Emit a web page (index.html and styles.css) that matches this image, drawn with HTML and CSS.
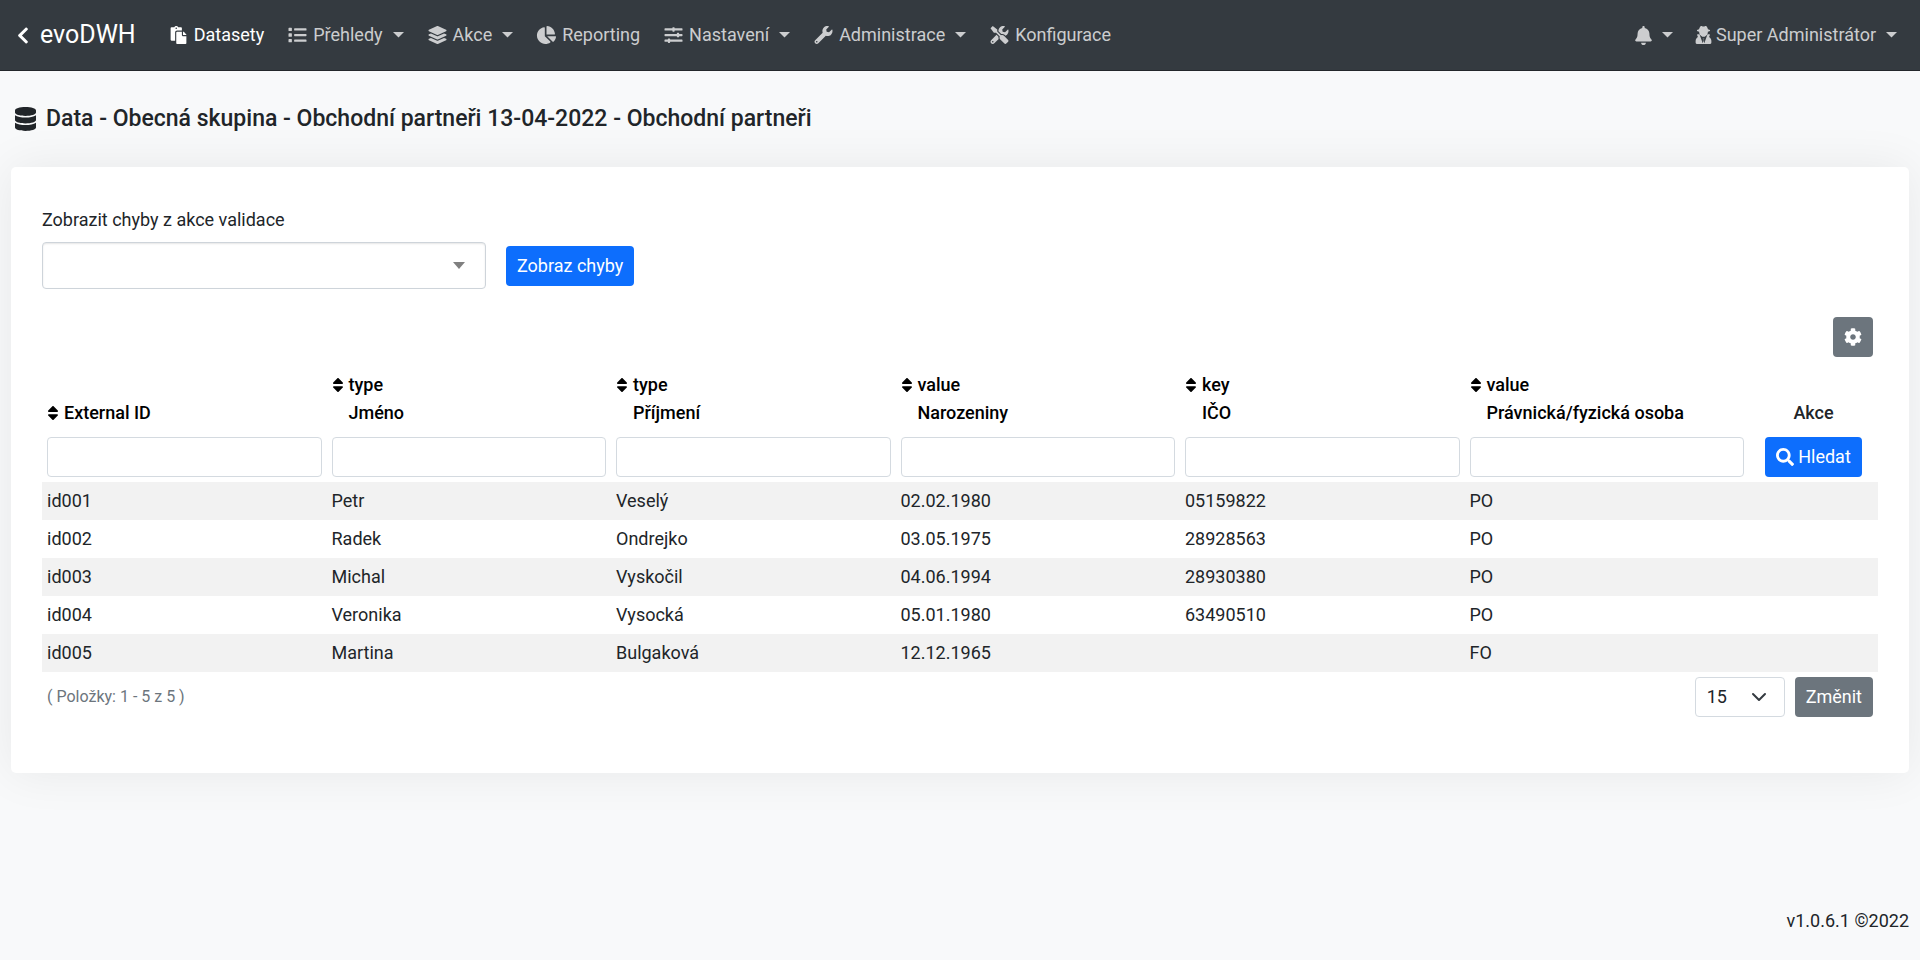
FILE: index.html
```html
<!DOCTYPE html>
<html lang="cs">
  <head>
    <meta charset="utf-8" />
    <meta name="viewport" content="width=device-width, initial-scale=1" />
    <title>evoDWH</title>
    <link rel="stylesheet" href="styles.css">
  </head>
  <body>
    <svg class="sprite" aria-hidden="true">
      <symbol id="chevron-left" viewBox="0 0 320 512"><path d="M34.52 239.03L228.87 44.69c9.37-9.37 24.57-9.37 33.94 0l22.67 22.67c9.36 9.36 9.37 24.52.04 33.9L131.49 256l154.02 154.75c9.34 9.38 9.32 24.54-.04 33.9l-22.67 22.67c-9.37 9.37-24.57 9.37-33.94 0L34.52 272.97c-9.37-9.37-9.37-24.57 0-33.94z"/></symbol>
      <symbol id="database" viewBox="0 0 448 512"><path d="M448 73.143v45.714C448 159.143 347.667 192 224 192S0 159.143 0 118.857V73.143C0 32.857 100.333 0 224 0s224 32.857 224 73.143zM448 176v102.857C448 319.143 347.667 352 224 352S0 319.143 0 278.857V176c48.125 33.143 136.208 48.572 224 48.572S399.874 209.143 448 176zm0 160v102.857C448 479.143 347.667 512 224 512S0 479.143 0 438.857V336c48.125 33.143 136.208 48.572 224 48.572S399.874 369.143 448 336z"/></symbol>
      <symbol id="paste" viewBox="0 0 448 512"><path d="M128 184c0-30.879 25.122-56 56-56h136V56c0-13.255-10.745-24-24-24h-80.61C204.306 12.89 183.637 0 160 0s-44.306 12.89-55.39 32H24C10.745 32 0 42.745 0 56v336c0 13.255 10.745 24 24 24h104V184zm32-144c13.255 0 24 10.745 24 24s-10.745 24-24 24-24-10.745-24-24 10.745-24 24-24zm184 248h104v200c0 13.255-10.745 24-24 24H184c-13.255 0-24-10.745-24-24V184c0-13.255 10.745-24 24-24h136v104c0 13.2 10.8 24 24 24zm104-38.059V256h-96v-96h6.059a24 24 0 0 1 16.97 7.029l65.941 65.941a24.002 24.002 0 0 1 7.03 16.971z"/></symbol>
      <symbol id="list" viewBox="0 0 512 512"><path d="M80 368H16a16 16 0 0 0-16 16v64a16 16 0 0 0 16 16h64a16 16 0 0 0 16-16v-64a16 16 0 0 0-16-16zm0-320H16A16 16 0 0 0 0 64v64a16 16 0 0 0 16 16h64a16 16 0 0 0 16-16V64a16 16 0 0 0-16-16zm0 160H16a16 16 0 0 0-16 16v64a16 16 0 0 0 16 16h64a16 16 0 0 0 16-16v-64a16 16 0 0 0-16-16zm416 176H176a16 16 0 0 0-16 16v32a16 16 0 0 0 16 16h320a16 16 0 0 0 16-16v-32a16 16 0 0 0-16-16zm0-320H176a16 16 0 0 0-16 16v32a16 16 0 0 0 16 16h320a16 16 0 0 0 16-16V80a16 16 0 0 0-16-16zm0 160H176a16 16 0 0 0-16 16v32a16 16 0 0 0 16 16h320a16 16 0 0 0 16-16v-32a16 16 0 0 0-16-16z"/></symbol>
      <symbol id="layers" viewBox="0 0 512 512"><path d="M12.41 148.02l232.94 105.67c6.8 3.09 14.49 3.09 21.29 0l232.94-105.67c16.55-7.51 16.55-32.52 0-40.03L266.65 2.31a25.607 25.607 0 0 0-21.29 0L12.41 107.98c-16.55 7.51-16.55 32.53 0 40.04zm487.18 88.28l-58.09-26.33-161.64 73.27c-7.56 3.43-15.59 5.17-23.86 5.17s-16.29-1.74-23.86-5.17L70.51 209.97l-58.1 26.33c-16.55 7.5-16.55 32.5 0 40l232.94 105.59c6.8 3.08 14.49 3.08 21.29 0L499.59 276.3c16.55-7.5 16.55-32.5 0-40zm0 127.8l-57.87-26.23-161.86 73.37c-7.56 3.43-15.59 5.17-23.86 5.17s-16.29-1.74-23.86-5.17L70.29 337.87 12.41 364.1c-16.55 7.5-16.55 32.5 0 40l232.94 105.59c6.8 3.08 14.49 3.08 21.29 0L499.59 404.1c16.55-7.5 16.55-32.5 0-40z"/></symbol>
      <symbol id="pie" viewBox="0 0 544 512"><path d="M527.79 288H290.5l158.03 158.03c6.04 6.04 15.98 6.53 22.19.68 38.7-36.46 65.32-85.61 73.13-140.86 1.34-9.46-6.51-17.85-16.06-17.85zm-15.83-64.8C503.72 103.74 408.26 8.28 288.8.04 279.68-.59 272 7.1 272 16.24V240h223.77c9.14 0 16.82-7.68 16.19-16.8zM224 288V50.71c0-9.55-8.39-17.4-17.84-16.06C86.99 51.49-4.1 155.6.14 280.37 4.5 408.51 114.83 513.59 243.03 511.98c50.4-.63 96.97-16.87 135.26-44.03 7.9-5.6 8.42-17.23 1.57-24.08L224 288z"/></symbol>
      <symbol id="sliders" viewBox="0 0 512 512"><path d="M496 384H160v-16c0-8.8-7.2-16-16-16h-32c-8.8 0-16 7.2-16 16v16H16c-8.8 0-16 7.2-16 16v32c0 8.8 7.2 16 16 16h80v16c0 8.8 7.2 16 16 16h32c8.8 0 16-7.2 16-16v-16h336c8.8 0 16-7.2 16-16v-32c0-8.8-7.2-16-16-16zm0-160h-80v-16c0-8.8-7.2-16-16-16h-32c-8.8 0-16 7.2-16 16v16H16c-8.8 0-16 7.2-16 16v32c0 8.8 7.2 16 16 16h336v16c0 8.8 7.2 16 16 16h32c8.8 0 16-7.2 16-16v-16h80c8.8 0 16-7.2 16-16v-32c0-8.8-7.2-16-16-16zm0-160H288V48c0-8.8-7.2-16-16-16h-32c-8.8 0-16 7.2-16 16v16H16C7.2 64 0 71.2 0 80v32c0 8.8 7.2 16 16 16h208v16c0 8.8 7.2 16 16 16h32c8.8 0 16-7.2 16-16v-16h208c8.8 0 16-7.2 16-16V80c0-8.8-7.2-16-16-16z"/></symbol>
      <symbol id="wrench" viewBox="0 0 512 512"><path d="M507.73 109.1c-2.24-9.03-13.54-12.09-20.12-5.51l-74.36 74.36-67.88-11.31-11.31-67.88 74.36-74.36c6.62-6.62 3.43-17.9-5.66-20.16-47.38-11.74-99.55.91-136.58 37.93-39.64 39.64-50.55 97.1-34.05 147.2L18.74 402.76c-24.99 24.99-24.99 65.51 0 90.5 24.99 24.99 65.51 24.99 90.5 0l213.21-213.21c50.12 16.71 107.47 5.68 147.37-34.22 37.07-37.07 49.7-89.32 37.91-136.73zM64 472c-13.25 0-24-10.75-24-24 0-13.26 10.75-24 24-24s24 10.74 24 24c0 13.25-10.75 24-24 24z"/></symbol>
      <symbol id="tools" viewBox="0 0 512 512"><path d="M501.1 395.7L384 278.6c-23.1-23.1-57.6-27.6-85.4-13.9L192 158.1V96L64 0 0 64l96 128h62.1l106.6 106.6c-13.6 27.8-9.2 62.3 13.9 85.4l117.1 117.1c14.6 14.6 38.2 14.6 52.7 0l52.7-52.7c14.5-14.6 14.5-38.2 0-52.7zM331.7 225c28.3 0 54.9 11 74.9 31l19.4 19.4c15.8-6.9 30.8-16.5 43.8-29.5 37.1-37.1 49.7-89.3 37.9-136.7-2.2-9-13.5-12.1-20.1-5.5l-74.4 74.4-67.9-11.3L334 98.9l74.4-74.4c6.6-6.6 3.4-17.9-5.7-20.2-47.4-11.7-99.6.9-136.6 37.9-28.5 28.5-41.9 66.1-41.2 103.6l82.1 82.1c8.1-1.9 16.5-2.9 24.7-2.9zm-103.9 82l-56.7-56.7L18.7 402.8c-25 25-25 65.5 0 90.5s65.5 25 90.5 0l123.6-123.6c-7.6-19.9-9.9-41.6-5-62.7zM64 472c-13.2 0-24-10.8-24-24 0-13.3 10.7-24 24-24s24 10.7 24 24c0 13.2-10.7 24-24 24z"/></symbol>
      <symbol id="bell" viewBox="0 0 448 512"><path d="M224 512c35.32 0 63.97-28.65 63.97-64H160.03c0 35.35 28.65 64 63.97 64zm215.39-149.71c-19.32-20.76-55.47-51.99-55.47-154.29 0-77.7-54.48-139.9-127.94-155.16V32c0-17.67-14.32-32-31.98-32s-31.98 14.33-31.98 32v20.84C118.56 68.1 64.08 130.3 64.08 208c0 102.3-36.15 133.53-55.47 154.29-6 6.45-8.66 14.16-8.61 21.71.11 16.4 12.98 32 32.1 32h383.8c19.12 0 32-15.6 32.1-32 .05-7.55-2.61-15.27-8.61-21.71z"/></symbol>
      <symbol id="user-secret" viewBox="0 0 448 512"><path d="M135 15c15-20 32-16 50-8 26 13 52 13 78 0 18-8 35-12 50 8 18 25 30 52 38 80 28 6 60 16 60 34s-32 28-64 34v22c0 28-10 52-26 70l-62 50h-70l-62-50c-16-18-26-42-26-70v-22c-32-6-64-16-64-34s32-28 60-34c8-28 20-55 38-80z"/><path d="M58 232h52l92 262 22-66 22 66 92-262h52c14 0 20 10 15 22l-22 56c40 26 65 68 65 116v42c0 26-19 44-45 44H45c-26 0-45-18-45-44v-42c0-48 25-90 65-116l-22-56c-5-12 1-22 15-22z"/><path d="M196 340h56l-14 34 12 50-26 60-26-60 12-50z" opacity=".3"/></symbol>
      <symbol id="cog" viewBox="0 0 512 512"><path d="M487.4 315.7l-42.6-24.6c4.3-23.2 4.3-47 0-70.2l42.6-24.6c4.9-2.8 7.1-8.6 5.5-14-11.1-35.6-30-67.8-54.7-94.6-3.8-4.1-10-5.1-14.8-2.3L380.8 110c-17.9-15.4-38.5-27.3-60.8-35.1V25.8c0-5.6-3.9-10.5-9.4-11.7-36.7-8.2-74.3-7.8-109.2 0-5.5 1.2-9.4 6.1-9.4 11.7V75c-22.2 7.9-42.8 19.8-60.8 35.1L88.7 85.5c-4.9-2.8-11-1.9-14.8 2.3-24.7 26.7-43.6 58.9-54.7 94.6-1.7 5.4.6 11.2 5.5 14L67.3 221c-4.3 23.2-4.3 47 0 70.2l-42.6 24.6c-4.9 2.8-7.1 8.6-5.5 14 11.1 35.6 30 67.8 54.7 94.6 3.8 4.1 10 5.1 14.8 2.3l42.6-24.6c17.9 15.4 38.5 27.3 60.8 35.1v49.2c0 5.6 3.9 10.5 9.4 11.7 36.7 8.2 74.3 7.8 109.2 0 5.5-1.2 9.4-6.1 9.4-11.7v-49.2c22.2-7.9 42.8-19.8 60.8-35.1l42.6 24.6c4.9 2.8 11 1.9 14.8-2.3 24.7-26.7 43.6-58.9 54.7-94.6 1.5-5.5-.7-11.3-5.6-14.1zM256 336c-44.1 0-80-35.9-80-80s35.9-80 80-80 80 35.9 80 80-35.9 80-80 80z"/></symbol>
      <symbol id="search" viewBox="0 0 512 512"><path d="M505 442.7L405.3 343c-4.5-4.5-10.6-7-17-7H372c27.6-35.3 44-79.7 44-128C416 93.1 322.9 0 208 0S0 93.1 0 208s93.1 208 208 208c48.3 0 92.7-16.4 128-44v16.3c0 6.4 2.5 12.5 7 17l99.7 99.7c9.4 9.4 24.6 9.4 33.9 0l28.3-28.3c9.4-9.4 9.4-24.6.1-34zM208 336c-70.7 0-128-57.2-128-128 0-70.7 57.2-128 128-128 70.7 0 128 57.2 128 128 0 70.7-57.2 128-128 128z"/></symbol>
      <symbol id="sort" viewBox="0 0 320 512"><path d="M41 288h238c21.4 0 32.1 25.9 17 41L177 448c-9.4 9.4-24.6 9.4-33.9 0L24 329c-15.1-15.1-4.4-41 17-41zm255-105L177 64c-9.4-9.4-24.6-9.4-33.9 0L24 183c-15.1 15.1-4.4 41 17 41h238c21.4 0 32.1-25.9 17-41z"/></symbol>
      <symbol id="caret" viewBox="0 0 11 6"><path d="M0 0h11L5.500 5.500z"/></symbol>
    </svg>

    <nav class="navbar">
      <a class="brand" href="#"><svg class="brand-icon"><use href="#chevron-left"/></svg>evoDWH</a>
      <ul class="menu">
        <li><a class="nav-link active" href="#"><svg class="icon"><use href="#paste"/></svg>Datasety</a></li>
        <li><a class="nav-link" href="#"><svg class="icon"><use href="#list"/></svg>Přehledy<svg class="caret"><use href="#caret"/></svg></a></li>
        <li><a class="nav-link" href="#"><svg class="icon"><use href="#layers"/></svg>Akce<svg class="caret"><use href="#caret"/></svg></a></li>
        <li><a class="nav-link" href="#"><svg class="icon"><use href="#pie"/></svg>Reporting</a></li>
        <li><a class="nav-link" href="#"><svg class="icon"><use href="#sliders"/></svg>Nastavení<svg class="caret"><use href="#caret"/></svg></a></li>
        <li><a class="nav-link" href="#"><svg class="icon"><use href="#wrench"/></svg>Administrace<svg class="caret"><use href="#caret"/></svg></a></li>
        <li><a class="nav-link" href="#"><svg class="icon"><use href="#tools"/></svg>Konfigurace</a></li>
      </ul>
      <ul class="menu menu-right">
        <li><a class="nav-link" href="#" aria-label="Upozornění"><svg class="icon-bell"><use href="#bell"/></svg><svg class="caret"><use href="#caret"/></svg></a></li>
        <li><a class="nav-link" href="#"><svg class="icon icon-narrow"><use href="#user-secret"/></svg>Super Administrátor<svg class="caret"><use href="#caret"/></svg></a></li>
      </ul>
    </nav>

    <main class="content">
      <h1 class="title"><svg class="title-icon"><use href="#database"/></svg>Data - Obecná skupina - Obchodní partneři 13-04-2022 - Obchodní partneři</h1>

      <div class="card">
        <form class="errors-form">
          <label for="validation">Zobrazit chyby z akce validace</label>
          <div class="errors-row">
            <select class="validation-select" id="validation" name="validation">
              <option value=""></option>
            </select>
            <button class="btn btn-primary" type="submit">Zobraz chyby</button>
          </div>
        </form>

        <form class="grid-form">
          <div class="grid-tools">
            <button class="btn btn-secondary" type="button" aria-label="Nastavení sloupců"><svg class="btn-icon"><use href="#cog"/></svg></button>
          </div>

          <table class="grid">
            <thead>
              <tr class="names">
                <th><a class="sort" href="#"><svg class="sort-icon"><use href="#sort"/></svg><span>External ID</span></a></th>
                <th><a class="sort" href="#"><svg class="sort-icon"><use href="#sort"/></svg><span>type<br />Jméno</span></a></th>
                <th><a class="sort" href="#"><svg class="sort-icon"><use href="#sort"/></svg><span>type<br />Příjmení</span></a></th>
                <th><a class="sort" href="#"><svg class="sort-icon"><use href="#sort"/></svg><span>value<br />Narozeniny</span></a></th>
                <th><a class="sort" href="#"><svg class="sort-icon"><use href="#sort"/></svg><span>key<br />IČO</span></a></th>
                <th><a class="sort" href="#"><svg class="sort-icon"><use href="#sort"/></svg><span>value<br />Právnická/fyzická osoba</span></a></th>
                <th class="actions">Akce</th>
              </tr>
              <tr class="filters">
                <td><input type="text" name="external_id" aria-label="External ID" /></td>
                <td><input type="text" name="first_name" aria-label="Jméno" /></td>
                <td><input type="text" name="last_name" aria-label="Příjmení" /></td>
                <td><input type="text" name="birthday" aria-label="Narozeniny" /></td>
                <td><input type="text" name="ico" aria-label="IČO" /></td>
                <td><input type="text" name="person_type" aria-label="Právnická/fyzická osoba" /></td>
                <td class="actions"><button class="btn btn-primary" type="submit"><svg class="btn-icon"><use href="#search"/></svg>Hledat</button></td>
              </tr>
            </thead>
            <tbody>
              <tr><td>id001</td><td>Petr</td><td>Veselý</td><td>02.02.1980</td><td>05159822</td><td>PO</td><td></td></tr>
              <tr><td>id002</td><td>Radek</td><td>Ondrejko</td><td>03.05.1975</td><td>28928563</td><td>PO</td><td></td></tr>
              <tr><td>id003</td><td>Michal</td><td>Vyskočil</td><td>04.06.1994</td><td>28930380</td><td>PO</td><td></td></tr>
              <tr><td>id004</td><td>Veronika</td><td>Vysocká</td><td>05.01.1980</td><td>63490510</td><td>PO</td><td></td></tr>
              <tr><td>id005</td><td>Martina</td><td>Bulgaková</td><td>12.12.1965</td><td></td><td>FO</td><td></td></tr>
            </tbody>
          </table>

          <div class="grid-footer">
            <span class="items">( Položky: 1 - 5 z 5 )</span>
            <select class="per-page" name="per_page" aria-label="Počet položek">
              <option>15</option>
              <option>30</option>
              <option>50</option>
            </select>
            <button class="btn btn-secondary" type="submit">Změnit</button>
          </div>
        </form>
      </div>
    </main>

    <footer class="footer">v1.0.6.1 ©2022</footer>
  </body>
</html>
```
FILE: styles.css
```css
* {
  box-sizing: border-box;
}

body {
  display: flex;
  flex-direction: column;
  min-height: 100vh;
  margin: 0;
  font-family: Roboto, "Liberation Sans", sans-serif;
  font-size: 18px;
  line-height: 28px;
  color: #212529;
  background-color: #f8f9fa;
}

a {
  color: inherit;
  text-decoration: none;
}

svg {
  flex: none;
  fill: currentColor;
}

button,
input,
select {
  font: inherit;
  color: inherit;
}

.sprite {
  position: absolute;
  width: 0;
  height: 0;
}

/* top bar */
.navbar {
  display: flex;
  align-items: center;
  min-height: 71px;
  padding: 0 12px 0 14px;
  color: rgba(255, 255, 255, 0.75);
  background-color: #343a40;
  border-bottom: 1px solid #23272b;
}

.brand {
  display: flex;
  align-items: center;
  gap: 8px;
  margin-right: 20px;
  font-size: 25px;
  color: #fff;
}

.brand-icon {
  width: 18px;
  height: 19px;
}

.menu {
  display: flex;
  align-items: center;
  margin: 0;
  padding: 0;
  list-style: none;
}

.menu-right {
  margin-left: auto;
}

.nav-link {
  display: flex;
  align-items: center;
  padding: 8px 11px;
}

.nav-link.active {
  color: #fff;
}

.icon {
  width: 23px;
  height: 18px;
  margin-right: 4px;
}

.icon-narrow {
  width: 17px;
}

.icon-bell {
  width: 17px;
  height: 19px;
}

.caret {
  width: 11px;
  height: 6px;
  margin-left: 10px;
}

/* page */
.content {
  padding: 0 11px;
}

.title {
  display: flex;
  align-items: center;
  gap: 10px;
  margin: 32px 4px;
  font-size: 23px;
  font-weight: 500;
  line-height: 32px;
}

.title-icon {
  width: 21px;
  height: 24px;
}

.card {
  padding: 39px 31px 56px;
  background-color: #fff;
  border-radius: 5px;
  box-shadow: 0 0 48px rgba(0, 0, 0, 0.07);
}

.btn {
  display: inline-flex;
  align-items: center;
  justify-content: center;
  gap: 4px;
  min-height: 40px;
  padding: 5px 10px;
  color: #fff;
  border: 1px solid transparent;
  border-radius: 4px;
  cursor: pointer;
}

.btn-primary {
  background-color: #0d6efd;
}

.btn-secondary {
  background-color: #6c757d;
}

.btn-icon {
  width: 18px;
  height: 18px;
}

/* validation errors */
.errors-form label {
  display: block;
  margin-bottom: 8px;
}

.errors-row {
  display: flex;
  align-items: center;
  gap: 20px;
}

.validation-select {
  width: 444px;
  height: 47px;
  appearance: none;
  border: 1px solid #ced4da;
  border-radius: 4px;
  background: #fff url("data:image/svg+xml,%3Csvg xmlns='http://www.w3.org/2000/svg' viewBox='0 0 12 7'%3E%3Cpath fill='%23808080' d='M0 0h12L6 7z'/%3E%3C/svg%3E") no-repeat right 20px center / 12px 7px;
  box-shadow: inset 0 1px 2px rgba(0, 0, 0, 0.1);
}

/* data grid */
.grid-tools {
  display: flex;
  justify-content: flex-end;
  padding: 28px 5px 9px;
}

.grid {
  width: 100%;
  table-layout: fixed;
  border-collapse: collapse;
}

.grid th,
.grid td {
  padding: 5px;
  text-align: left;
}

.grid th {
  font-weight: 500;
  vertical-align: bottom;
}

.grid .actions {
  width: 129px;
  text-align: center;
}

.sort {
  display: flex;
  align-items: flex-start;
  gap: 5px;
  color: #000;
}

.sort-icon {
  width: 12px;
  height: 18px;
  margin-top: 5px;
}

.filters input {
  display: block;
  width: 100%;
  height: 40px;
  padding: 5px 9px;
  border: 1px solid #d4dae0;
  border-radius: 4px;
}

.filters .btn {
  vertical-align: top;
}

.grid tbody tr:nth-child(odd) {
  background-color: #f2f2f2;
}

.grid-footer {
  display: flex;
  align-items: center;
  gap: 10px;
  padding: 5px 5px 0;
}

.items {
  margin-right: auto;
  font-size: 16px;
  color: #6c757d;
}

.per-page {
  width: 90px;
  height: 40px;
  padding: 0 11px;
  appearance: none;
  border: 1px solid #d4dae0;
  border-radius: 4px;
  background: #fff url("data:image/svg+xml,%3Csvg xmlns='http://www.w3.org/2000/svg' viewBox='0 0 16 16'%3E%3Cpath fill='none' stroke='%23343a40' stroke-linecap='round' stroke-linejoin='round' stroke-width='2' d='M2 5l6 6 6-6'/%3E%3C/svg%3E") no-repeat right 17px center / 16px 16px;
}

.footer {
  margin-top: auto;
  padding: 25px 11px;
  text-align: right;
}
```
